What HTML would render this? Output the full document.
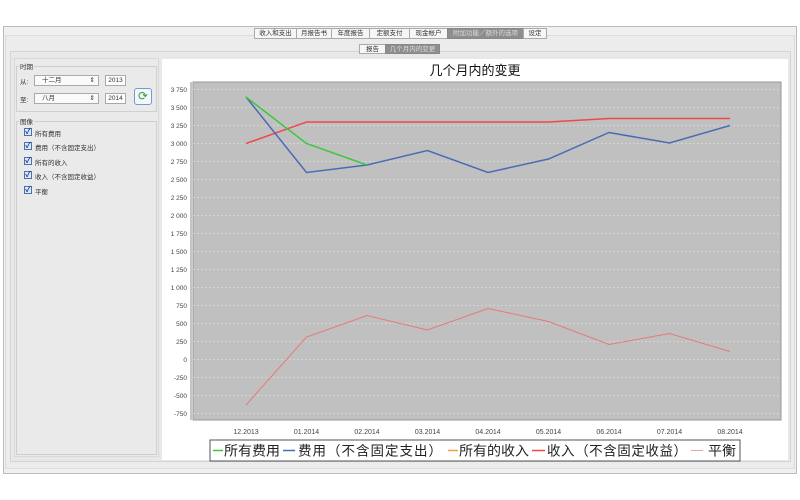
<!DOCTYPE html>
<html><head><meta charset="utf-8"><style>
*{margin:0;padding:0;box-sizing:border-box}
body{width:800px;height:500px;background:#fff;position:relative;overflow:hidden;font-family:"Liberation Sans","Noto Sans CJK SC",sans-serif;font-size:7px;color:#333}
.abs{position:absolute}
.tab{position:absolute;top:28px;height:11px;border:1px solid #aaa;background:#f6f6f6;font-size:6.5px;line-height:9px;text-align:center;color:#333}
.sel{background:#8e8e8e;color:#ddd;border-color:#888}
.cb{position:absolute;left:24px;width:8px;height:8px;border:1px solid #4a70b0;background:#dfe8f6;font-size:8px;line-height:6px;color:#1a3f8a;text-align:center;font-weight:bold}
.lbl{position:absolute;left:35px;font-size:6.5px;color:#333}
</style></head><body>
<div class="abs" style="left:3px;top:26px;width:794px;height:448px;border:1px solid #bcbcbc;background:#f0f0f0"></div>
<div class="abs" style="left:5px;top:35px;width:790px;height:434px;border:1px solid #dcdcdc;background:#ececec"></div>
<div class="abs" style="left:10px;top:51px;width:781px;height:411px;border:1px solid #d4d4d4;background:#e8e8e8"></div>
<div class="tab" style="left:254px;width:43px">收入和支出</div>
<div class="tab" style="left:296px;width:36px">月报告书</div>
<div class="tab" style="left:331px;width:39px">年度报告</div>
<div class="tab" style="left:369px;width:41px">定额支付</div>
<div class="tab" style="left:409px;width:39px">现金帐户</div>
<div class="tab sel" style="left:447px;width:77px">附加功能／额外的选项</div>
<div class="tab" style="left:523px;width:24px">设定</div>
<div class="tab" style="left:359px;top:44px;height:10px;width:27px">报告</div>
<div class="tab sel" style="left:385px;top:44px;height:10px;width:55px">几个月内的变更</div>
<div class="abs" style="left:14px;top:58px;width:145px;height:399px;border:1px solid #d8d8d8;background:#eaeaea"></div>
<div class="abs" style="left:16px;top:66px;width:141px;height:46px;border:1px solid #cfcfcf"></div>
<div class="abs" style="left:19px;top:61px;background:#eaeaea;padding:0 1px;font-size:6.5px">时期</div>
<div class="abs" style="left:20px;top:76px;font-size:6.5px">从:</div>
<div class="abs" style="left:20px;top:94px;font-size:6.5px">至:</div>
<div class="abs" style="left:34px;top:75px;width:65px;height:11px;border:1px solid #aaa;background:#fafafa;font-size:6.5px;padding-left:7px;line-height:9px">十二月<span style="position:absolute;right:3px">⇕</span></div>
<div class="abs" style="left:34px;top:93px;width:65px;height:11px;border:1px solid #aaa;background:#fafafa;font-size:6.5px;padding-left:7px;line-height:9px">八月<span style="position:absolute;right:3px">⇕</span></div>
<div class="abs" style="left:105px;top:75px;width:21px;height:11px;border:1px solid #aaa;background:#fff;font-size:6.5px;line-height:9px;text-align:center">2013</div>
<div class="abs" style="left:105px;top:93px;width:21px;height:11px;border:1px solid #aaa;background:#fff;font-size:6.5px;line-height:9px;text-align:center">2014</div>
<div class="abs" style="left:134px;top:88px;width:18px;height:17px;border:1px solid #6f9ad6;border-radius:3px;background:#f4f8fc;color:#3a9a3a;font-size:12px;line-height:14px;text-align:center">⟳</div>
<div class="abs" style="left:16px;top:121px;width:141px;height:334px;border:1px solid #cfcfcf"></div>
<div class="abs" style="left:19px;top:116px;background:#eaeaea;padding:0 1px;font-size:6.5px">图像</div>
<div class="cb" style="top:128px">✓</div><div class="lbl" style="top:128px">所有费用</div>
<div class="cb" style="top:142px">✓</div><div class="lbl" style="top:142px">费用（不含固定支出）</div>
<div class="cb" style="top:157px">✓</div><div class="lbl" style="top:157px">所有的收入</div>
<div class="cb" style="top:171px">✓</div><div class="lbl" style="top:171px">收入（不含固定收益）</div>
<div class="cb" style="top:186px">✓</div><div class="lbl" style="top:186px">平衡</div>
<svg class="abs" style="left:0;top:0" width="800" height="500" font-family="Liberation Sans, Noto Sans CJK SC, sans-serif">
<rect x="162" y="59" width="626" height="401" fill="#fff"/>
<text x="475" y="75" font-size="13" text-anchor="middle" fill="#111">几个月内的变更</text>
<rect x="193" y="82" width="588" height="338" fill="#c0c0c0" stroke="#999" stroke-width="1"/>
<line x1="191" y1="82" x2="191" y2="420" stroke="#888"/>
<g stroke="#e0e0e0" stroke-dasharray="2,2" stroke-width="0.6">
<line x1="193" x2="781" y1="89.3" y2="89.3"/><line x1="193" x2="781" y1="107.3" y2="107.3"/><line x1="193" x2="781" y1="125.3" y2="125.3"/><line x1="193" x2="781" y1="143.3" y2="143.3"/><line x1="193" x2="781" y1="161.3" y2="161.3"/><line x1="193" x2="781" y1="179.3" y2="179.3"/><line x1="193" x2="781" y1="197.3" y2="197.3"/><line x1="193" x2="781" y1="215.3" y2="215.3"/><line x1="193" x2="781" y1="233.3" y2="233.3"/><line x1="193" x2="781" y1="251.3" y2="251.3"/><line x1="193" x2="781" y1="269.3" y2="269.3"/><line x1="193" x2="781" y1="287.3" y2="287.3"/><line x1="193" x2="781" y1="305.3" y2="305.3"/><line x1="193" x2="781" y1="323.3" y2="323.3"/><line x1="193" x2="781" y1="341.3" y2="341.3"/><line x1="193" x2="781" y1="359.3" y2="359.3"/><line x1="193" x2="781" y1="377.3" y2="377.3"/><line x1="193" x2="781" y1="395.3" y2="395.3"/><line x1="193" x2="781" y1="413.3" y2="413.3"/>
</g>
<g font-size="6.5" fill="#444" text-anchor="end">
<text x="187" y="92">3 750</text><text x="187" y="110">3 500</text><text x="187" y="128">3 250</text><text x="187" y="146">3 000</text><text x="187" y="164">2 750</text><text x="187" y="182">2 500</text><text x="187" y="200">2 250</text><text x="187" y="218">2 000</text><text x="187" y="236">1 750</text><text x="187" y="254">1 500</text><text x="187" y="272">1 250</text><text x="187" y="290">1 000</text><text x="187" y="308">750</text><text x="187" y="326">500</text><text x="187" y="344">250</text><text x="187" y="362">0</text><text x="187" y="380">-250</text><text x="187" y="398">-500</text><text x="187" y="416">-750</text>
</g>
<g font-size="7" fill="#444" text-anchor="middle">
<text x="246" y="434">12.2013</text><text x="306.5" y="434">01.2014</text><text x="367" y="434">02.2014</text><text x="427.5" y="434">03.2014</text><text x="488" y="434">04.2014</text><text x="548.5" y="434">05.2014</text><text x="609" y="434">06.2014</text><text x="669.5" y="434">07.2014</text><text x="730" y="434">08.2014</text>
</g>
<polyline fill="none" stroke="#e87878" stroke-width="1" points="246,405 306.5,337 367,315.5 427.5,330 488,308.5 548.5,321.5 609,344.5 669.5,333.5 730,351.5"/>
<polyline fill="none" stroke="#f04848" stroke-width="1.5" points="246,143.5 306.5,122 367,122 427.5,122 488,122 548.5,122 609,118.5 669.5,118.5 730,118.5"/>
<polyline fill="none" stroke="#4a6ab8" stroke-width="1.5" points="246,97 306.5,172.5 367,165 427.5,150.5 488,172.5 548.5,159 609,132.5 669.5,143 730,125.5"/>
<polyline fill="none" stroke="#3cc83c" stroke-width="1.5" points="246,97 306.5,143.5 367,165"/>
<rect x="210" y="440" width="530" height="21" fill="#fff" stroke="#555"/>
<g font-size="13.5" fill="#222">
<line x1="213" x2="223" y1="450.5" y2="450.5" stroke="#3cc83c" stroke-width="1.5"/><text x="224" y="455.5" textLength="56" lengthAdjust="spacingAndGlyphs">所有费用</text>
<line x1="283" x2="295" y1="450.5" y2="450.5" stroke="#4a6ab8" stroke-width="1.5"/><text x="298" y="455.5" textLength="144" lengthAdjust="spacing">费用（不含固定支出）</text>
<line x1="448" x2="458" y1="450.5" y2="450.5" stroke="#f0a040" stroke-width="1.5"/><text x="459" y="455.5" textLength="70" lengthAdjust="spacingAndGlyphs">所有的收入</text>
<line x1="532" x2="545" y1="450.5" y2="450.5" stroke="#f04848" stroke-width="1.5"/><text x="547" y="455.5" textLength="140" lengthAdjust="spacing">收入（不含固定收益）</text>
<line x1="691" x2="703" y1="450.5" y2="450.5" stroke="#e8a0a0" stroke-width="1"/><text x="708" y="455.5" textLength="28" lengthAdjust="spacingAndGlyphs">平衡</text>
</g>
</svg>
</body></html>
